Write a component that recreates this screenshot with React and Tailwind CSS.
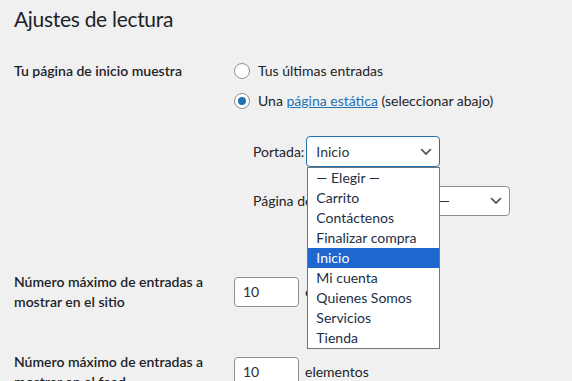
const options = [
  '— Elegir —',
  'Carrito',
  'Contáctenos',
  'Finalizar compra',
  'Inicio',
  'Mi cuenta',
  'Quienes Somos',
  'Servicios',
  'Tienda'
]

function Chevron() {
  return (
    <svg className="w-4 h-4 shrink-0" viewBox="0 0 20 20" fill="#50575e">
      <path d="M5 6l5 5 5-5 2 1-7 7-7-7 2-1z" />
    </svg>
  )
}

function Radio({ checked }) {
  return (
    <span className="w-4 h-4 rounded-full border border-[#8c8f94] bg-white flex items-center justify-center shrink-0">
      {checked && <span className="w-2 h-2 rounded-full bg-[#2271b1]" />}
    </span>
  )
}

function NumberInput() {
  return (
    <div className="w-[65px] h-[30px] rounded-[4px] border border-[#8c8f94] bg-white flex items-center pl-2 text-[#2c3338]">
      10
    </div>
  )
}

export default function App() {
  return (
    <div className="min-h-screen bg-[#f0f0f1] text-[#1d2327] text-[14px] leading-5 font-['Lato','Noto_Sans',sans-serif] pl-[14px] pt-[4px] overflow-hidden">
      <h1 className="text-[21px] leading-[29px] font-normal tracking-[-0.3px]">Ajustes de lectura</h1>

      <div className="grid grid-cols-[200px_1fr] gap-x-5 mt-[28px]">
        {/* página de inicio */}
        <div className="font-semibold">Tu página de inicio muestra</div>
        <div>
          <div className="flex items-center gap-2">
            <Radio />
            <span>Tus últimas entradas</span>
          </div>
          <div className="flex items-center gap-2 mt-[10px]">
            <Radio checked />
            <span>
              Una <a className="text-[#2271b1] underline" href="#">página estática</a> (seleccionar abajo)
            </span>
          </div>

          <div className="pl-[19px] mt-[25px] flex items-center gap-[2px]">
            <span>Portada:</span>
            <div className="relative">
              <div className="w-[134px] h-[31px] rounded-[4px] border border-[#2271b1] bg-white flex items-center justify-between pl-[9px] pr-[5px] text-[#2c3338]">
                <span>Inicio</span>
                <Chevron />
              </div>
              <ul className="absolute top-full left-px w-[133px] z-10 bg-white border border-[#767676] text-[#1b3047]">
                {options.map((opt) => (
                  <li
                    key={opt}
                    className={`h-5 leading-5 pl-[8px] ${opt === 'Inicio' ? 'bg-[#1e66d0] text-white' : ''}`}
                  >
                    {opt}
                  </li>
                ))}
              </ul>
            </div>
          </div>

          <div className="pl-[19px] mt-[19px] flex items-center gap-1">
            <span>Página de entradas:</span>
            <div className="w-[134px] h-[30px] rounded-[4px] border border-[#8c8f94] bg-white flex items-center justify-between pl-[9px] pr-[5px] text-[#2c3338]">
              <span>— Elegir —</span>
              <Chevron />
            </div>
          </div>
        </div>

        {/* entradas en el sitio */}
        <div className="font-semibold mt-[56px]">Número máximo de entradas a mostrar en el sitio</div>
        <div className="mt-[61px] flex items-center gap-[6px] self-start">
          <NumberInput />
          <span>elementos</span>
        </div>

        {/* entradas en el feed */}
        <div className="font-semibold mt-[40px]">Número máximo de entradas a mostrar en el feed</div>
        <div className="mt-[45px] flex items-center gap-[6px] self-start">
          <NumberInput />
          <span>elementos</span>
        </div>
      </div>
    </div>
  )
}
